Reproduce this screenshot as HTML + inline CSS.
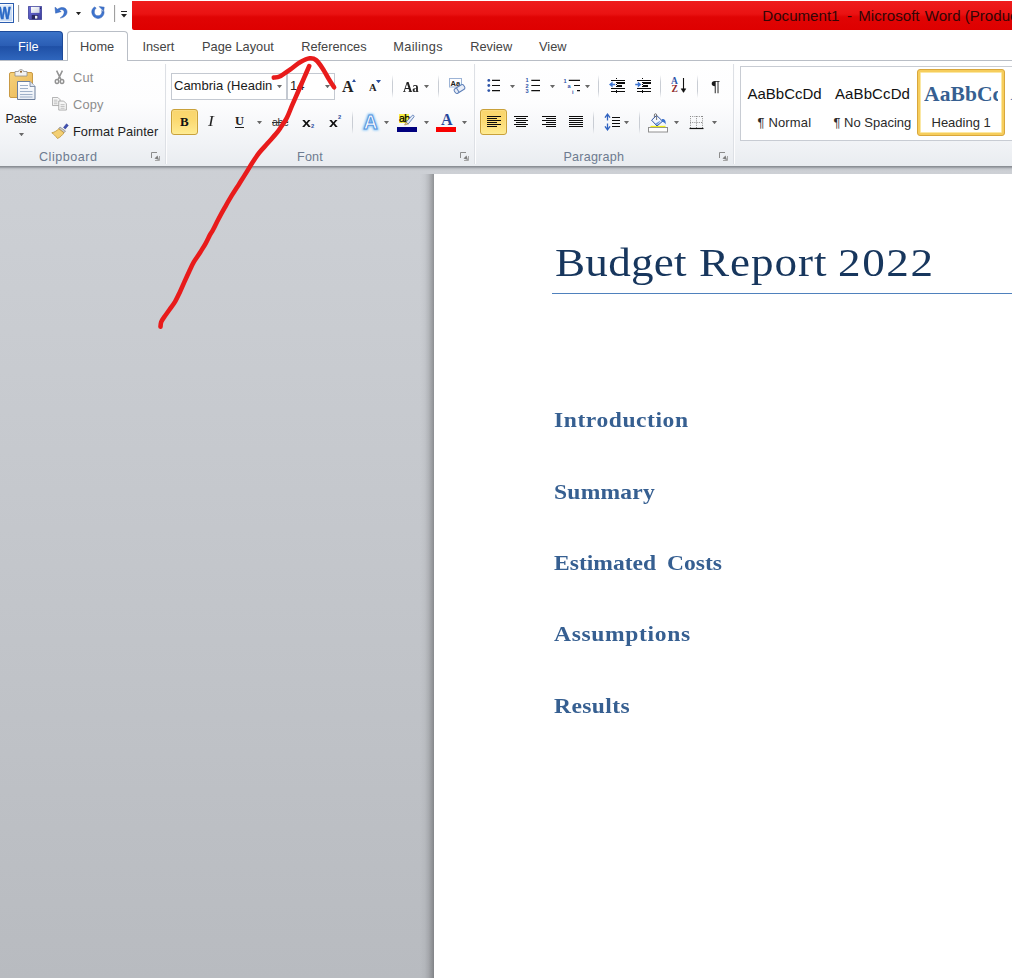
<!DOCTYPE html>
<html lang="en">
<head>
<meta charset="utf-8">
<title>Document1 - Microsoft Word</title>
<style>
*{box-sizing:border-box;margin:0;padding:0}
html,body{width:1012px;height:978px;overflow:hidden;background:#fff}
body{position:relative;font-family:"Liberation Sans",sans-serif;font-size:12.5px;color:#1e1e1e}
.abs{position:absolute}
.t{position:absolute;white-space:pre;line-height:1;letter-spacing:.2px}
/* title bar */
#titlebar{left:0;top:0;width:1012px;height:30px;background:#fff}
#redbar{left:131.5px;top:1px;width:881px;height:28.5px;border-radius:0 0 0 2px;background:linear-gradient(#ee1d1d 0%,#ea1212 45%,#e00404 55%,#de0000 100%)}
#title{left:762.3px;top:8.2px;font-size:15.1px;color:#330606;letter-spacing:0}
/* tabs */
#tabrow{left:0;top:30px;width:1012px;height:31px;background:#fff;border-bottom:1px solid #b9bec6}
#filetab{left:0;top:31px;width:63px;height:29px;border-radius:0 4px 0 0;background:linear-gradient(#3b73c8 0%,#2a5db4 50%,#1f50a6 52%,#2f66bd 100%);border:1px solid #1d4a99;border-left:none;border-bottom:none}
#hometab{left:67px;top:31px;width:61px;height:30px;background:#fff;border:1px solid #b9bec6;border-bottom:none;border-radius:4px 4px 0 0}
.tab{top:41.3px;font-size:12.8px;color:#444;letter-spacing:0}
/* ribbon */
#ribbon{left:0;top:61px;width:1012px;height:105px;background:linear-gradient(#ffffff 0%,#fdfdfe 40%,#f1f3f6 78%,#e9ecf0 100%)}
#ribbonline{left:0;top:166px;width:1012px;height:5px;background:linear-gradient(#8b8f95 0%,#8b8f95 20%,#b3b6bc 40%,#c6c9ce 70%,#cdd0d600 100%);z-index:1}
.gsep{top:64px;width:2px;height:100px;background:linear-gradient(90deg,#dde0e5 50%,#fdfdfe 50%)}
.glabel{top:150.5px;color:#6d7b90;font-size:12.6px}
.sep{width:1px;background:linear-gradient(#fff0,#c9cdd4 30%,#c9cdd4 70%,#fff0)}
.dd{width:5px;height:3.2px;color:#686868;background:currentColor;clip-path:polygon(0 0,100% 0,50% 100%)}
.box{background:#fff;border:1px solid #c4c9d1}
.hot{border:1px solid #c9a13a;border-radius:3px;background:linear-gradient(#f9d56e 0%,#fbd970 40%,#fde181 70%,#ffec8e 100%);box-shadow:inset 0 0 0 1px #fbe9a855}
/* document */
#docarea{left:0;top:167px;width:1012px;height:811px;background:linear-gradient(#cdd0d5 0%,#c5c8cd 40%,#b8bbc0 100%)}
#pageshadow{left:420px;top:174px;width:14px;height:804px;background:linear-gradient(90deg,#0000 0%,#00000008 35%,#0000001a 60%,#00000038 85%,#0000004d 100%)}
#page{left:434px;top:174px;width:578px;height:804px;background:#fff}
.doc{font-family:"Liberation Serif",serif}
.dt{top:243px;font-size:40.3px;color:#17365d;transform:scaleX(1.12);transform-origin:0 0}
#titleline{left:552px;top:293px;width:460px;height:1px;background:#4f81bd}
.h1{left:554.3px;font-size:22px;font-weight:bold;color:#365f91;transform:scaleX(1.07);transform-origin:0 0}
</style>
</head>
<body>
<!-- TITLE BAR -->
<div class="abs" id="titlebar"></div>
<div class="abs" id="redbar"></div>
<div class="t" id="title">Document1<span style="margin-left:3.2px"> </span>-<span style="margin-left:2.2px"> </span>Microsoft<span style="margin-left:1px"> </span>Word (Product Activation Failed)</div>

<!-- TAB ROW -->
<div class="abs" id="tabrow"></div>
<div class="abs" id="filetab"></div>
<div class="abs" id="hometab"></div>
<div class="t tab" style="left:18px;color:#fff">File</div>
<div class="t tab" style="left:80.1px">Home</div>
<div class="t tab" style="left:142.4px">Insert</div>
<div class="t tab" style="left:202px">Page Layout</div>
<div class="t tab" style="left:301.2px">References</div>
<div class="t tab" style="left:393.2px;letter-spacing:.35px">Mailings</div>
<div class="t tab" style="left:470.2px">Review</div>
<div class="t tab" style="left:539px">View</div>

<!-- RIBBON -->
<div class="abs" id="ribbon"></div>
<div class="abs" id="ribbonline"></div>
<!-- QUICK ACCESS TOOLBAR -->
<div class="abs" style="left:-6px;top:3px;width:20px;height:20px;border:1.5px solid #2b5db0;background:linear-gradient(135deg,#f2f7fd,#bcd3f2);box-shadow:inset 0 0 0 1px #ffffffcc;overflow:hidden">
  <div class="t" style="left:4.2px;top:0.9px;font-size:16.5px;font-weight:bold;color:#2c6ac6;letter-spacing:0;transform:scaleX(.74);transform-origin:0 0;-webkit-text-stroke:.5px #2c6ac6;text-shadow:0 0 1px #7fa8e0">W</div>
</div>
<div class="abs" style="left:18px;top:5px;width:1px;height:17px;background:#a0a0a0"></div>
<div class="abs" style="left:19px;top:5px;width:1px;height:17px;background:#f4f4f4"></div>
<svg class="abs" style="left:28px;top:6px" width="14" height="14" viewBox="0 0 14 14">
  <defs><linearGradient id="sv" x1="0" y1="0" x2="1" y2="1"><stop offset="0" stop-color="#6d6fd8"/><stop offset="1" stop-color="#3a3c9c"/></linearGradient>
  <linearGradient id="sl" x1="0" y1="0" x2="1" y2="1"><stop offset="0" stop-color="#ffffff"/><stop offset="1" stop-color="#c9cfdf"/></linearGradient></defs>
  <path d="M0.4 0.4H13.6V13.6H1.6L0.4 12.4Z" fill="url(#sv)" stroke="#34368f" stroke-width=".8"/>
  <rect x="3" y=".9" width="8.5" height="6" fill="url(#sl)"/>
  <rect x="12.1" y="1.6" width=".9" height="1.4" fill="#23245e"/>
  <rect x="3.8" y="9" width="6.4" height="4.2" fill="#26275f"/>
  <rect x="7" y="9.8" width="2.4" height="2.8" fill="#eef0f8"/>
</svg>
<svg class="abs" style="left:54px;top:6px" width="14" height="13" viewBox="0 0 14 13">
  <path d="M1 1.2L1.6 7.2L7.2 5.6L5 4.3C7.6 2.6 10.4 4 10.2 6.6C10 8.8 8.4 10.6 6.2 12C10.4 11.4 13.2 9 13 5.6C12.8 1.8 8 0 3.6 3.2Z" fill="#3d74cf" stroke="#2a59ad" stroke-width=".5"/>
</svg>
<div class="abs dd" style="left:76px;top:12px;color:#222"></div>
<svg class="abs" style="left:91px;top:6px" width="14" height="13" viewBox="0 0 14 13">
  <path d="M8.2 0.6L13.2 1.2L12.4 6.4L10.8 4.4C11.4 7.6 9.6 9.8 7 9.8C4.4 9.8 2.8 7.8 3.4 4.8C3.6 3.6 4.4 2.6 5.2 2L3.4 1C1.4 2.4 0.6 4.4 0.8 6.6C1.2 10 3.8 12.4 7 12.4C10.6 12.4 13.4 9.4 13 5.6Z" fill="#3d74cf" stroke="#2a59ad" stroke-width=".5"/>
</svg>
<div class="abs" style="left:114px;top:5px;width:1px;height:17px;background:#a0a0a0"></div>
<div class="abs" style="left:115px;top:5px;width:1px;height:17px;background:#f4f4f4"></div>
<div class="abs" style="left:121px;top:11px;width:6px;height:1px;background:#222"></div>
<div class="abs dd" style="left:121px;top:14px;width:6px;height:3.5px;color:#222"></div>

<!-- CLIPBOARD GROUP -->
<svg class="abs" style="left:8px;top:69px" width="29" height="32" viewBox="0 0 29 32">
  <defs>
    <linearGradient id="cb" x1="0" y1="0" x2="1" y2="1"><stop offset="0" stop-color="#f6d27c"/><stop offset="1" stop-color="#e9b552"/></linearGradient>
    <linearGradient id="pp" x1="0" y1="0" x2="0" y2="1"><stop offset="0" stop-color="#ffffff"/><stop offset="1" stop-color="#e8edf5"/></linearGradient>
  </defs>
  <rect x="1.5" y="3.5" width="23" height="25" rx="1.5" fill="url(#cb)" stroke="#c99a45"/>
  <path d="M7 2.5H10.5C10.5 0 15.5 0 15.5 2.5H19V7H7Z" fill="#f2f2f2" stroke="#8e8e8e" stroke-width=".8"/>
  <circle cx="13" cy="2.8" r="1" fill="#8a5a22"/>
  <path d="M9.5 12.5H22L27 17.5V30.5H9.5Z" fill="url(#pp)" stroke="#6d7f9c"/>
  <path d="M22 12.5V17.5H27" fill="#dfe6f0" stroke="#6d7f9c" stroke-width=".8"/>
  <g stroke="#9fb0c8" stroke-width="1"><path d="M12 16.5H20M12 19.5H20M12 22.5H24.5M12 25.5H24.5M12 28H24.5"/></g>
</svg>
<div class="t" style="left:5.6px;top:113px;font-size:12.6px;letter-spacing:-.25px">Paste</div>
<div class="abs dd" style="left:19px;top:133px"></div>

<svg class="abs" style="left:53px;top:69px" width="13" height="16" viewBox="0 0 13 16">
  <g fill="none" stroke="#929292" stroke-width="1.5"><path d="M3.6 1.6L8 10.6M9.4 1.6L5 10.6"/><ellipse cx="4" cy="12.4" rx="1.7" ry="2"/><ellipse cx="9" cy="12.4" rx="1.7" ry="2"/></g>
</svg>
<div class="t" style="left:73px;top:71.7px;color:#8d8d8d;font-size:12.8px">Cut</div>
<svg class="abs" style="left:52px;top:97px" width="15.3" height="13.5" viewBox="0 0 17 15">
  <g fill="#f6f6f6" stroke="#a8a8a8" stroke-width="1"><path d="M.5 .5H6.5L9 3V9.5H.5Z"/><path d="M7.5 4.5H13L16 7.5V14.5H7.5Z"/></g>
  <g stroke="#b9b9b9" stroke-width="1"><path d="M2 3.5H6M2 5.5H6M2 7.5H6M9.5 8.5H14M9.5 10.5H14M9.5 12.5H14"/></g>
</svg>
<div class="t" style="left:73px;top:99px;color:#8d8d8d;font-size:12.8px">Copy</div>
<svg class="abs" style="left:51px;top:123px" width="18" height="16" viewBox="0 0 18 16">
  <path d="M12.5 4.5L15.5 .8L17.3 2.4L14.3 6Z" fill="#3f4fb2" stroke="#2b388c" stroke-width=".5"/>
  <path d="M9 4L14.5 8L13 9.8L7.8 5.8Z" fill="#c9c9c9" stroke="#777" stroke-width=".6"/>
  <path d="M7.8 5.8L13 9.8C11.5 12 9 14.5 6.5 15.5C4.5 13 2.5 11 .8 9.8C3.5 9.2 6 7.6 7.8 5.8Z" fill="#f3cf73" stroke="#b58a2c" stroke-width=".7"/>
</svg>
<div class="t" style="left:73px;top:126px;font-size:12.8px;letter-spacing:.05px">Format Painter</div>
<div class="t glabel" style="left:39px;letter-spacing:.5px">Clipboard</div>
<svg class="abs launcher" style="left:151px;top:152px" width="9" height="9" viewBox="0 0 9 9"><path d="M.5 6V.5H6" fill="none" stroke="#8c8c8c"/><path d="M3.5 6.5L8 8L6.5 3.5Z" fill="#7e7e7e"/><path d="M8.5 4V8.5H4" fill="none" stroke="#a6a6a6"/></svg>
<div class="abs gsep" style="left:165px"></div>
<!-- FONT GROUP -->
<div class="abs box" style="left:171px;top:73px;width:116px;height:27px"></div>
<div class="abs box" style="left:287px;top:73px;width:48px;height:27px"></div>
<div class="t" style="left:174px;top:78.7px;font-size:13px;letter-spacing:0;color:#1a1a1a">Cambria (Headin</div>
<div class="t" style="left:290px;top:78.7px;font-size:13px;letter-spacing:0;color:#222">14</div>
<div class="abs dd" style="left:277px;top:85px"></div>
<div class="abs dd" style="left:325px;top:85px"></div>
<div class="t doc" style="left:342px;top:78.6px;font-size:16px;font-weight:bold;letter-spacing:0;color:#222">A</div>
<div class="abs" style="left:351.5px;top:78.8px;width:0;height:0;border-left:2.8px solid transparent;border-right:2.8px solid transparent;border-bottom:3.2px solid #2a4fa0"></div>
<div class="t doc" style="left:369px;top:83.2px;font-size:10.5px;font-weight:bold;letter-spacing:0;color:#222">A</div>
<div class="abs dd" style="left:376px;top:80px;color:#2a4fa0"></div>
<div class="abs sep" style="left:392px;top:75px;height:23px"></div>
<div class="t doc" style="left:403px;top:79.5px;font-size:15px;font-weight:bold;letter-spacing:0;color:#222;transform:scaleX(.86);transform-origin:0 0">Aa</div>
<div class="abs dd" style="left:424px;top:85px"></div>
<div class="abs sep" style="left:438px;top:75px;height:23px"></div>
<svg class="abs" style="left:448px;top:77px" width="18" height="18" viewBox="0 0 18 18">
  <rect x="1.5" y="1.5" width="12" height="8.5" fill="#fdfdff" stroke="#9db4d6"/>
  <text x="2.6" y="8.6" font-family="Liberation Sans, sans-serif" font-size="7.5" font-weight="bold" fill="#222">Aa</text>
  <g transform="rotate(-32 11.5 12)"><rect x="6" y="9.3" width="11" height="5.4" rx="2.2" fill="#e9eef8" stroke="#5d7fb8"/><path d="M9.5 9.5V14.5" stroke="#5d7fb8"/></g>
</svg>

<div class="abs hot" style="left:171px;top:109px;width:27px;height:26px"></div>
<div class="t doc" style="left:180px;top:115.4px;font-size:13px;font-weight:bold;letter-spacing:0;color:#111">B</div>
<div class="t doc" style="left:208px;top:114.6px;font-size:14px;font-style:italic;letter-spacing:0;color:#222;transform:scaleX(1.25);transform-origin:0 0">I</div>
<div class="t doc" style="left:235px;top:114.6px;font-size:12.5px;font-weight:bold;letter-spacing:0;color:#222">U</div>
<div class="abs" style="left:235px;top:127px;width:9px;height:1px;background:#222"></div>
<div class="abs dd" style="left:257px;top:121px"></div>
<div class="t" style="left:272px;top:116.8px;font-size:10.6px;letter-spacing:-.3px;color:#333;text-decoration:line-through">abc</div>
<div class="t" style="left:301.5px;top:116.2px;font-size:13.5px;font-weight:bold;letter-spacing:0;color:#111;transform:scaleX(1.18);transform-origin:0 0">x</div>
<div class="t" style="left:311px;top:123.6px;font-size:5.8px;font-weight:bold;letter-spacing:0;color:#2a4fa0">2</div>
<div class="t" style="left:328.5px;top:116.2px;font-size:13.5px;font-weight:bold;letter-spacing:0;color:#111;transform:scaleX(1.18);transform-origin:0 0">x</div>
<div class="t" style="left:338px;top:115.4px;font-size:5.8px;font-weight:bold;letter-spacing:0;color:#2a4fa0">2</div>
<div class="abs sep" style="left:352px;top:111px;height:23px"></div>
<svg class="abs" style="left:360px;top:110px" width="24" height="24" viewBox="0 0 24 24">
  <defs><filter id="glow" x="-30%" y="-30%" width="160%" height="160%"><feGaussianBlur stdDeviation="1.1"/></filter></defs>
  <text x="3.6" y="19" font-family="Liberation Sans, sans-serif" font-size="19.5" font-weight="bold" fill="#7cc0f7" stroke="#7cc0f7" stroke-width="2.6" filter="url(#glow)">A</text>
  <text x="3.6" y="19" font-family="Liberation Sans, sans-serif" font-size="19.5" font-weight="bold" fill="#fff" stroke="#5a96de" stroke-width="1">A</text>
</svg>
<div class="abs dd" style="left:384px;top:121px"></div>
<div class="abs" style="left:399px;top:114px;width:10px;height:9px;background:#f6f043"></div>
<div class="t" style="left:399px;top:113.2px;font-size:10.5px;letter-spacing:-.6px;color:#000;-webkit-text-stroke:.25px #000">ab</div>
<svg class="abs" style="left:403px;top:114px" width="13" height="12" viewBox="0 0 13 12"><path d="M3 8.2L9.2 1.4C10 .6 11.6 1.8 11 2.8L5.2 10Z" fill="#e4ebf6" stroke="#5d7fb8" stroke-width=".9"/><path d="M3 8.2L1.6 11L5.2 10Z" fill="#f3d48a" stroke="#9a8040" stroke-width=".6"/></svg>
<div class="abs" style="left:397px;top:127px;width:20px;height:5px;background:#00007e"></div>
<div class="abs dd" style="left:424px;top:121px"></div>
<div class="t doc" style="left:441px;top:111.8px;font-size:16px;font-weight:bold;letter-spacing:0;color:#27479a">A</div>
<div class="abs" style="left:436px;top:127px;width:20px;height:5px;background:#f80000"></div>
<div class="abs dd" style="left:462px;top:121px"></div>
<div class="t glabel" style="left:297px">Font</div>
<svg class="abs launcher" style="left:460px;top:152px" width="9" height="9" viewBox="0 0 9 9"><path d="M.5 6V.5H6" fill="none" stroke="#8c8c8c"/><path d="M3.5 6.5L8 8L6.5 3.5Z" fill="#7e7e7e"/><path d="M8.5 4V8.5H4" fill="none" stroke="#a6a6a6"/></svg>
<div class="abs gsep" style="left:474px"></div>
<!-- PARAGRAPH GROUP -->
<svg class="abs" style="left:486px;top:77px" width="16" height="16" viewBox="0 0 16 16">
  <g fill="#2f55a8"><circle cx="2.8" cy="3.4" r="1.4"/><circle cx="2.8" cy="8.5" r="1.4"/><circle cx="2.8" cy="13.6" r="1.4"/></g>
  <path d="M6 3.4H14M6 8.5H14M6 13.6H14" stroke="#111" stroke-width="1.1"/>
</svg>
<div class="abs dd" style="left:510px;top:85px"></div>
<svg class="abs" style="left:525px;top:77px" width="16" height="17" viewBox="0 0 16 17">
  <g font-family="Liberation Sans, sans-serif" font-size="5.6" font-weight="bold" fill="#2f55a8"><text x=".6" y="5.4">1</text><text x=".6" y="10.5">2</text><text x=".6" y="15.7">3</text></g>
  <path d="M6.3 3.4H15M6.3 8.5H15M6.3 13.6H15" stroke="#111" stroke-width="1.1"/>
</svg>
<div class="abs dd" style="left:550px;top:85px"></div>
<svg class="abs" style="left:563px;top:77px" width="18" height="18" viewBox="0 0 18 18">
  <g font-family="Liberation Sans, sans-serif" font-size="5.6" font-weight="bold" fill="#2f55a8"><text x=".6" y="5.6">1</text><text x="4.6" y="10.8">a</text><text x="9" y="16.6">i</text></g>
  <path d="M5.8 3.4H17M11 8.5H17M14 13.6H17" stroke="#111" stroke-width="1.1"/>
</svg>
<div class="abs dd" style="left:585px;top:85px"></div>
<div class="abs sep" style="left:598px;top:75px;height:23px"></div>
<svg class="abs" style="left:608px;top:78px" width="18" height="15" viewBox="0 0 18 15">
  <g shape-rendering="crispEdges" fill="#0c0c0c"><rect x="3" y="2" width="14" height="1"/><rect x="9" y="4" width="8" height="2"/><rect x="9" y="7" width="5" height="2"/><rect x="3" y="10" width="14" height="1"/><rect x="3" y="13" width="14" height="1"/>
  <rect x="8" y="0" width="1" height="1"/><rect x="8" y="2" width="1" height="1"/><rect x="8" y="4" width="1" height="1"/><rect x="8" y="6" width="1" height="1"/><rect x="8" y="8" width="1" height="1"/><rect x="8" y="10" width="1" height="1"/><rect x="8" y="12" width="1" height="1"/><rect x="8" y="14" width="1" height="1"/></g>
  <path d="M1 6.5L4.6 3.6V5.7H7.2V7.3H4.6V9.4Z" fill="#3b73d1"/>
</svg>
<svg class="abs" style="left:634px;top:78px" width="18" height="15" viewBox="0 0 18 15">
  <g shape-rendering="crispEdges" fill="#0c0c0c"><rect x="3" y="2" width="14" height="1"/><rect x="9" y="4" width="8" height="2"/><rect x="9" y="7" width="5" height="2"/><rect x="3" y="10" width="14" height="1"/><rect x="3" y="13" width="14" height="1"/>
  <rect x="8" y="0" width="1" height="1"/><rect x="8" y="2" width="1" height="1"/><rect x="8" y="4" width="1" height="1"/><rect x="8" y="6" width="1" height="1"/><rect x="8" y="8" width="1" height="1"/><rect x="8" y="10" width="1" height="1"/><rect x="8" y="12" width="1" height="1"/><rect x="8" y="14" width="1" height="1"/></g>
  <path d="M7.4 6.5L3.8 3.6V5.7H1.2V7.3H3.8V9.4Z" fill="#3b73d1"/>
</svg>
<div class="abs sep" style="left:660px;top:75px;height:23px"></div>
<div class="t doc" style="left:671px;top:76.6px;font-size:9.5px;font-weight:bold;letter-spacing:0;color:#2f55a8">A</div>
<div class="t doc" style="left:671.5px;top:84.6px;font-size:9.5px;font-weight:bold;letter-spacing:0;color:#8e2a2a">Z</div>
<svg class="abs" style="left:680px;top:77px" width="8" height="17" viewBox="0 0 8 17"><path d="M3.5 1V14.5" stroke="#111" stroke-width="1.1"/><path d="M1.2 11.8L3.5 15.4L5.8 11.8Z" fill="#111" stroke="#111" stroke-width=".6"/></svg>
<div class="abs sep" style="left:697px;top:75px;height:23px"></div>
<div class="t" style="left:710.5px;top:78.2px;font-size:15.5px;letter-spacing:0;color:#1a1a1a;transform:scaleX(1.12);transform-origin:0 0">¶</div>

<div class="abs hot" style="left:480px;top:109px;width:27px;height:26px"></div>
<svg class="abs" style="left:486px;top:116px" width="16" height="12" viewBox="0 0 16 12" shape-rendering="crispEdges" fill="#0c0c0c"><rect x="1" y="0" width="14" height="1"/><rect x="1" y="2" width="10" height="1"/><rect x="1" y="4" width="14" height="1"/><rect x="1" y="6" width="10" height="1"/><rect x="1" y="8" width="14" height="1"/><rect x="1" y="10" width="10" height="1"/></svg>
<svg class="abs" style="left:513px;top:116px" width="16" height="12" viewBox="0 0 16 12" shape-rendering="crispEdges" fill="#0c0c0c"><rect x="1" y="0" width="14" height="1"/><rect x="3" y="2" width="10" height="1"/><rect x="1" y="4" width="14" height="1"/><rect x="3" y="6" width="10" height="1"/><rect x="1" y="8" width="14" height="1"/><rect x="3" y="10" width="10" height="1"/></svg>
<svg class="abs" style="left:541px;top:116px" width="16" height="12" viewBox="0 0 16 12" shape-rendering="crispEdges" fill="#0c0c0c"><rect x="1" y="0" width="14" height="1"/><rect x="5" y="2" width="10" height="1"/><rect x="1" y="4" width="14" height="1"/><rect x="5" y="6" width="10" height="1"/><rect x="1" y="8" width="14" height="1"/><rect x="5" y="10" width="10" height="1"/></svg>
<svg class="abs" style="left:568px;top:116px" width="16" height="12" viewBox="0 0 16 12" shape-rendering="crispEdges" fill="#0c0c0c"><rect x="1" y="0" width="14" height="1"/><rect x="1" y="2" width="14" height="1"/><rect x="1" y="4" width="14" height="1"/><rect x="1" y="6" width="14" height="1"/><rect x="1" y="8" width="14" height="1"/><rect x="1" y="10" width="14" height="1"/></svg>
<div class="abs sep" style="left:593px;top:111px;height:23px"></div>
<svg class="abs" style="left:603px;top:113px" width="19" height="18" viewBox="0 0 19 18">
  <path d="M4.5 2V7.6M4.5 10.4V16" stroke="#2f62c0" stroke-width="1.3"/><path d="M2 4.6L4.5 1.2L7 4.6M2 13.4L4.5 16.8L7 13.4" fill="none" stroke="#2f62c0" stroke-width="1.4"/>
  <g shape-rendering="crispEdges" fill="#0c0c0c"><rect x="9" y="4" width="8" height="1"/><rect x="9" y="7" width="8" height="1"/><rect x="9" y="10" width="8" height="1"/><rect x="9" y="13" width="8" height="1"/></g>
</svg>
<div class="abs dd" style="left:624px;top:121px"></div>
<div class="abs sep" style="left:639px;top:111px;height:23px"></div>
<svg class="abs" style="left:647px;top:113px" width="22" height="20" viewBox="0 0 22 20">
  <rect x="1.5" y="14.5" width="19" height="4.5" fill="#fff" stroke="#8f8f8f"/>
  <path d="M3.5 13.5H18.5" stroke="#f2ee1a" stroke-width="1.3"/>
  <path d="M9.6 2.4L15.6 8.2L10 13L4.6 7.2Z" fill="#f3f7fd" stroke="#2f55a8" stroke-width="1"/>
  <path d="M8 10.8L14.2 7.2L10 12.2Z" fill="#6f9be0"/>
  <path d="M15 6.2C17.6 5.6 19.2 8 18.6 11.4C17.6 10 16.6 8.8 14.6 8.8Z" fill="#3d74cf"/>
  <path d="M9.6 7V1.8C9.6 .4 7.4 .4 7.4 1.8V4.4" fill="none" stroke="#666" stroke-width=".9"/>
</svg>
<div class="abs dd" style="left:674px;top:121px"></div>
<svg class="abs" style="left:689px;top:115px" width="15" height="15" viewBox="0 0 15 15">
  <path d="M1 1.5H14M1 7.5H14M1.5 1V13M7.5 1V13M13.5 1V13" stroke="#8a8a8a" stroke-width="1" stroke-dasharray="1 1.2"/>
  <path d="M.5 13.5H14.5" stroke="#111" stroke-width="1.2"/>
</svg>
<div class="abs dd" style="left:712px;top:121px"></div>
<div class="t glabel" style="left:563.5px">Paragraph</div>
<svg class="abs launcher" style="left:719px;top:152px" width="9" height="9" viewBox="0 0 9 9"><path d="M.5 6V.5H6" fill="none" stroke="#8c8c8c"/><path d="M3.5 6.5L8 8L6.5 3.5Z" fill="#7e7e7e"/><path d="M8.5 4V8.5H4" fill="none" stroke="#a6a6a6"/></svg>
<div class="abs gsep" style="left:733px"></div>
<!-- STYLES GROUP -->
<div class="abs box" style="left:740px;top:66px;width:300px;height:75px;border-color:#c8ccd3"></div>
<div class="t" style="left:747.5px;top:86.1px;font-size:15px;letter-spacing:0;color:#111">AaBbCcDd</div>
<div class="t" style="left:757.5px;top:115.8px;font-size:13px;letter-spacing:.15px;color:#2a2a2a">¶ Normal</div>
<div class="t" style="left:835px;top:86.1px;font-size:15px;letter-spacing:.1px;color:#111">AaBbCcDd</div>
<div class="t" style="left:833.5px;top:115.8px;font-size:13px;letter-spacing:0;color:#2a2a2a">¶ No Spacing</div>
<div class="abs" style="left:917px;top:69px;width:88px;height:67px;border-radius:3px;border:1px solid #d9a73c;background:#f6cd5c"></div>
<div class="abs" style="left:920px;top:72px;width:82px;height:61px;border-radius:1px;border:1px solid #fbe8a4;background:#fff;overflow:hidden">
  <div class="t doc" style="left:3px;top:10.6px;font-size:21.5px;font-weight:bold;letter-spacing:.1px;color:#365f91;width:73.6px;overflow:hidden">AaBbCc</div>
  <div class="t" style="left:10.5px;top:43.1px;font-size:13px;letter-spacing:0;color:#2a2a2a">Heading 1</div>
</div>
<div class="t doc" style="left:1010.5px;top:83px;font-size:21.5px;font-weight:bold;letter-spacing:0;color:#4f81bd">AaBbCc</div>

<!-- DOCUMENT -->
<div class="abs" id="docarea"></div>
<div class="abs" id="pageshadow"></div>
<div class="abs" id="page"></div>
<div class="t doc dt" style="left:555.3px;letter-spacing:.22px">Budget</div>
<div class="t doc dt" style="left:699.3px;letter-spacing:.84px">Report</div>
<div class="t doc dt" style="left:837.6px;letter-spacing:1.41px">2022</div>
<div class="abs" id="titleline"></div>
<div class="t doc h1" style="top:409.3px;letter-spacing:.53px">Introduction</div>
<div class="t doc h1" style="top:480.8px;letter-spacing:.21px">Summary</div>
<div class="t doc h1" style="top:552.2px;letter-spacing:.01px">Estimated</div>
<div class="t doc h1" style="top:552.2px;left:667.2px;letter-spacing:.02px">Costs</div>
<div class="t doc h1" style="top:623.4px;letter-spacing:.61px">Assumptions</div>
<div class="t doc h1" style="top:694.8px;letter-spacing:.39px">Results</div>

<!-- RED HAND-DRAWN ARROW ANNOTATION -->
<svg class="abs" style="left:0;top:0;z-index:5" width="1012" height="978" viewBox="0 0 1012 978">
  <g fill="none" stroke="#e81b1b" stroke-width="4.6" stroke-linecap="round" stroke-linejoin="round">
    <path d="M160.5 326.6 C160.6 325.8 160.6 323.6 161.2 322.0 C161.8 320.4 162.9 318.9 164.3 316.9 C165.7 314.9 167.6 312.4 169.4 309.8 C171.2 307.2 173.4 304.5 175.1 301.6 C176.8 298.7 178.2 295.6 179.7 292.4 C181.2 289.1 182.7 285.7 184.3 282.1 C185.9 278.5 187.8 274.3 189.4 270.9 C191.0 267.5 192.2 264.8 194.0 261.7 C195.8 258.6 198.2 255.6 200.1 252.5 C202.0 249.4 204.1 246.2 205.7 243.3 C207.3 240.4 208.6 237.4 209.8 235.1 C211.1 232.8 211.8 232.2 213.2 229.5 C214.6 226.8 216.6 222.6 218.5 219.0 C220.4 215.4 222.5 211.6 224.7 207.7 C226.9 203.8 229.4 199.3 231.8 195.4 C234.2 191.5 236.6 187.9 239.0 184.2 C241.4 180.4 243.9 176.5 246.1 172.9 C248.3 169.3 250.1 166.1 252.3 162.7 C254.5 159.3 256.8 155.7 259.4 152.5 C261.9 149.3 264.9 146.4 267.6 143.3 C270.3 140.2 273.7 136.6 275.8 134.1 C277.9 131.6 278.4 130.9 280.2 128.2 C282.0 125.5 284.7 121.9 286.7 118.1 C288.7 114.3 290.2 109.8 292.2 105.2 C294.2 100.6 296.6 95.1 298.6 90.5 C300.6 85.9 302.4 81.7 304.2 77.6 C306.0 73.5 308.4 68.0 309.2 66.1"/>
    <path d="M273.8 77.6 C274.9 77.4 277.4 77.6 280.2 76.2 C283.0 74.8 287.0 71.7 290.4 69.3 C293.8 66.9 297.3 63.8 300.5 62.0 C303.7 60.2 307.1 58.6 309.7 58.3 C312.3 58.0 314.0 58.4 316.1 60.1 C318.2 61.8 320.5 65.2 322.6 68.4 C324.8 71.6 327.1 76.2 329.0 79.4 C330.9 82.6 333.2 86.0 334.1 87.3"/>
  </g>
</svg>

</body>
</html>
